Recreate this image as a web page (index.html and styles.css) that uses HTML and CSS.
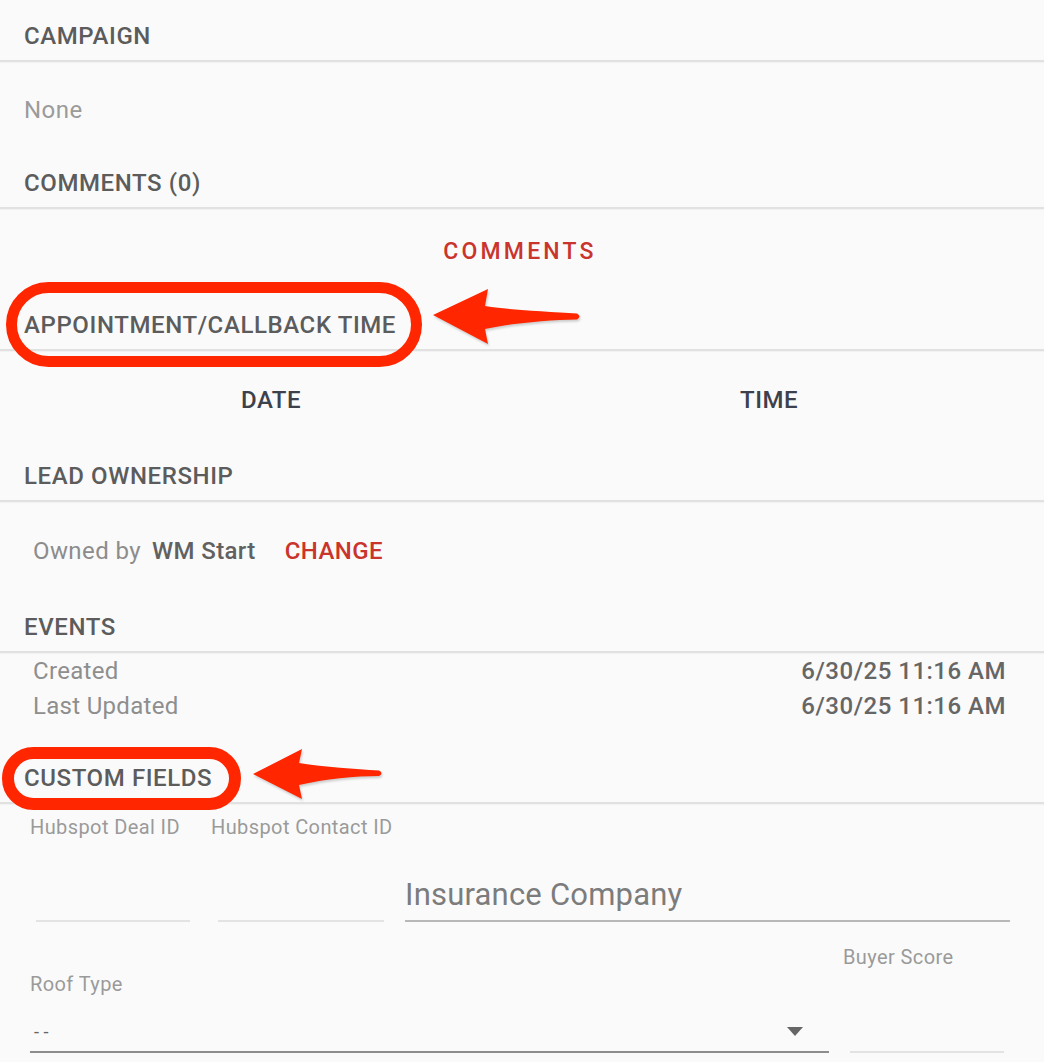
FILE: index.html
```html
<!DOCTYPE html>
<html lang="en">
<head>
    <meta charset="UTF-8">
    <meta name="viewport" content="width=device-width, initial-scale=1.0">
    <title>Lead Detail</title>
    <link rel="stylesheet" href="styles.css">
</head>
<body>
    <div class="lead-page">
        <div class="section-head first">CAMPAIGN</div>
        <div class="plain-value">None</div>

        <div class="section-head comments-head">COMMENTS (0)</div>
        <div class="comments-row"><span class="text-btn">COMMENTS</span></div>

        <div class="section-head appt-head">
            APPOINTMENT/CALLBACK TIME
            <div class="mark-oval appt-oval"></div>
            <svg class="mark-arrow appt-arrow" width="155" height="62" viewBox="430 284 155 62">
                <path d="M433,313 L488,287 L485,304 C510,308 550,310 577,311.5 Q582,314.5 577,317.5 C550,318 512,321 485,327 L488,342 Z" fill="#ff2600"/>
            </svg>
        </div>
        <div class="date-time">
            <div>DATE</div>
            <div>TIME</div>
        </div>

        <div class="section-head lead-head">LEAD OWNERSHIP</div>
        <div class="owner-row">
            <span class="owner-label">Owned by</span>
            <span class="owner-name">WM Start</span>
            <span class="text-btn change-btn">CHANGE</span>
        </div>

        <div class="section-head events-head">EVENTS</div>
        <div class="events">
            <div class="event-row"><span>Created</span><span class="event-date">6/30/25 11:16 AM</span></div>
            <div class="event-row"><span>Last Updated</span><span class="event-date">6/30/25 11:16 AM</span></div>
        </div>

        <div class="section-head custom-head">
            CUSTOM FIELDS
            <div class="mark-oval custom-oval"></div>
            <svg class="mark-arrow custom-arrow" width="136" height="58" viewBox="250 745 136 58">
                <path d="M253,774 L302,749 L299,763 C325,767 355,769 379,770.5 Q384,773 379,776 C355,776 325,779 299,785 L302,799 Z" fill="#ff2600"/>
            </svg>
        </div>

        <div class="field-row">
            <div class="field deal-field">
                <div class="field-label">Hubspot Deal ID</div>
                <div class="field-line"></div>
            </div>
            <div class="field contact-field">
                <div class="field-label">Hubspot Contact ID</div>
                <div class="field-line"></div>
            </div>
            <div class="field insurance-field">
                <div class="placeholder">Insurance Company</div>
                <div class="field-line dark"></div>
            </div>
        </div>

        <div class="field-row second">
            <div class="field roof-field">
                <div class="field-label">Roof Type</div>
                <div class="select-value"><span>- -</span><span class="caret"></span></div>
                <div class="field-line darker"></div>
            </div>
            <div class="field buyer-field">
                <div class="field-label">Buyer Score</div>
                <div class="buyer-space"></div>
                <div class="field-line"></div>
            </div>
        </div>
    </div>
</body>
</html>
```
FILE: styles.css
```css
body {
    margin: 0;
    padding: 0;
    background-color: #fafafa;
    font-family: Roboto, "Liberation Sans", Arial, sans-serif;
    color: #5c5c5c;
}
.lead-page {
    width: 1044px;
    overflow: hidden;
}
.section-head {
    position: relative;
    padding: 0 0 9px 24px;
    line-height: 30px;
    font-size: 24px;
    font-weight: 500;
    letter-spacing: 0.6px;
    color: #5c5c5c;
    border-bottom: 2px solid #e1e1e1;
    box-shadow: 0 1px 1px rgba(0, 0, 0, 0.03);
}
.section-head.first {
    margin-top: 21px;
}
.plain-value {
    margin-top: 33px;
    padding-left: 24px;
    line-height: 30px;
    font-size: 24px;
    letter-spacing: 0.5px;
    color: #9b9b9b;
}
.comments-head {
    margin-top: 43px;
}
.comments-row {
    margin-top: 28px;
    text-align: center;
    line-height: 30px;
}
.text-btn {
    color: #c9342c;
    font-weight: 500;
}
.comments-row .text-btn {
    font-size: 23px;
    letter-spacing: 3.2px;
    margin-left: -4px;
}
.appt-head {
    margin-top: 41px;
}
.mark-oval {
    position: absolute;
    border: 11px solid #ff2600;
    border-radius: 46px;
    box-sizing: border-box;
}
.appt-oval {
    left: 6px;
    top: -28px;
    width: 416px;
    height: 85px;
}
.custom-oval {
    left: 2px;
    top: -16px;
    width: 239px;
    height: 63px;
    border-width: 12px;
}
.mark-arrow {
    position: absolute;
    filter: drop-shadow(1px 2px 1px rgba(0, 0, 0, 0.18));
}
.appt-arrow {
    left: 430px;
    top: -24px;
}
.custom-arrow {
    left: 250px;
    top: -18px;
}
.date-time {
    display: grid;
    grid-template-columns: 1fr 1fr;
    margin-top: 34px;
    padding: 0 26px 0 22px;
    line-height: 30px;
    font-size: 24px;
    font-weight: 500;
    letter-spacing: 0.5px;
    color: #3c414c;
    text-align: center;
}
.lead-head {
    margin-top: 46px;
}
.owner-row {
    display: flex;
    align-items: center;
    margin-top: 34px;
    padding-left: 33px;
    line-height: 30px;
    font-size: 24px;
    letter-spacing: 0.4px;
}
.owner-label {
    color: #8c8c8c;
}
.owner-name {
    margin-left: 11px;
    color: #616161;
    font-weight: 500;
}
.change-btn {
    margin-left: 29px;
}
.events-head {
    margin-top: 46px;
}
.events {
    margin-top: 1px;
    padding: 0 38px 0 33px;
    font-size: 24px;
    letter-spacing: 0.3px;
    color: #8e8e8e;
}
.event-row {
    display: flex;
    justify-content: space-between;
    line-height: 35px;
}
.event-date {
    color: #666;
    font-weight: 500;
    letter-spacing: 0.5px;
}
.custom-head {
    margin-top: 39px;
}
.field-row {
    display: flex;
    margin-top: 11px;
    padding-left: 30px;
}
.field {
    display: flex;
    flex-direction: column;
}
.field-label {
    line-height: 24px;
    font-size: 20px;
    letter-spacing: 0.4px;
    color: #9a9a9a;
    white-space: nowrap;
}
.field-line {
    height: 2px;
    background-color: #e3e3e3;
}
.field-line.dark {
    background-color: #b8b8b8;
}
.field-line.darker {
    background-color: #8d8d8d;
}
.deal-field {
    width: 160px;
    height: 107px;
    justify-content: space-between;
}
.deal-field .field-line {
    margin-left: 6px;
}
.contact-field {
    width: 173px;
    margin-left: 21px;
    justify-content: space-between;
}
.contact-field .field-line {
    margin-left: 7px;
}
.insurance-field {
    width: 605px;
    margin-left: 21px;
    justify-content: flex-end;
}
.placeholder {
    line-height: 34px;
    font-size: 31px;
    letter-spacing: 0.2px;
    color: #7c7c7c;
    margin-bottom: 8px;
}
.field-row.second {
    margin-top: 23px;
    align-items: flex-end;
}
.roof-field {
    width: 799px;
}
.select-value {
    display: flex;
    justify-content: space-between;
    align-items: center;
    height: 40px;
    margin-top: 15px;
    padding: 0 26px 0 4px;
    font-size: 18px;
    color: #666;
}
.caret {
    width: 0;
    height: 0;
    border-left: 8px solid transparent;
    border-right: 8px solid transparent;
    border-top: 9px solid #666;
}
.buyer-field {
    width: 161px;
    margin-left: 14px;
}
.buyer-field .field-line {
    margin-left: 7px;
}
.buyer-space {
    height: 82px;
}
```
